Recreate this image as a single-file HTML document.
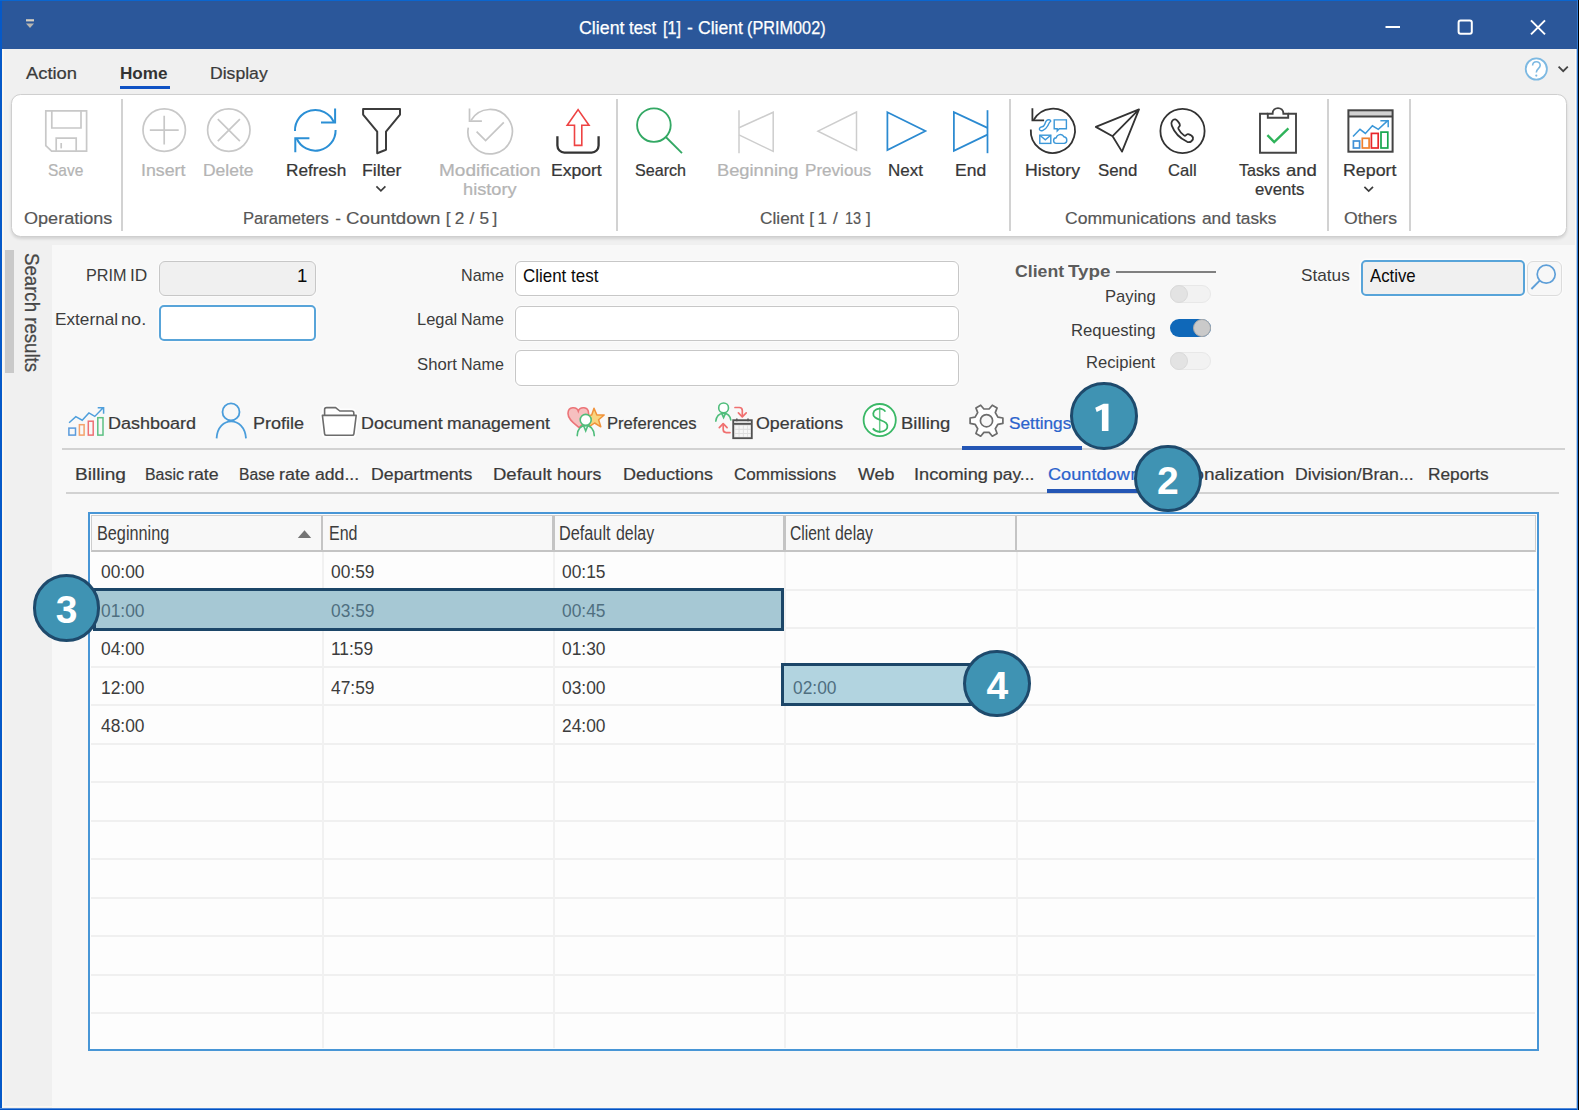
<!DOCTYPE html>
<html><head><meta charset="utf-8"><title>Client test [1] - Client (PRIM002)</title>
<style>
*{box-sizing:border-box;margin:0;padding:0}
html,body{width:1579px;height:1110px;overflow:hidden}
body{position:relative;background:#f8f8f8;font-family:"Liberation Sans",sans-serif}
.a{position:absolute}
.t{position:absolute;white-space:nowrap;line-height:1;transform-origin:0 0;display:block}
.sep{position:absolute;top:99px;width:2px;height:132px;background:#d2d2d2}
.inp{position:absolute;background:#fff;border:1.8px solid #c7c7c7;border-radius:6px;box-shadow:0 0 0 1px #fbfbfb}
.hl{position:absolute;border:3px solid #1c4668}
.cir{position:absolute;width:67.8px;height:67.8px;border-radius:50%;background:#3f93b3;border:3.6px solid #1e4a6c;color:#fff;font-weight:bold;font-size:39px;line-height:55.4px;padding-top:5.2px;text-align:center}
.tg{position:absolute;width:41px;height:18px;border-radius:9px}
.tg.off{background:#f2f2f2;border:1px solid #e8e8e8}
.tg.off i{position:absolute;left:-1px;top:-1px;width:18px;height:18px;border-radius:50%;background:#e3e3e3;border:1px solid #dadada}
.tg.on{background:#0f68b9}
.tg.on i{position:absolute;right:0;top:0;width:18px;height:18px;border-radius:50%;background:#cacaca;border:1px solid #a9a9a9}
.cir b{display:inline-block;transform:scaleX(1.0)}
svg{position:absolute;overflow:visible}
</style></head>
<body>
<!-- sidebar -->
<div class="a" style="left:0;top:49px;width:52px;height:1061px;background:#f0f0f0"></div>
<!-- menu bar bg -->
<div class="a" style="left:0;top:49px;width:1579px;height:195.5px;background:#f0f0f0"></div>
<!-- title bar -->
<div class="a" style="left:0;top:0;width:1579px;height:49px;background:#2b579a"></div>
<!-- ribbon panel -->
<div class="a" style="left:10.8px;top:93.7px;width:1556.3px;height:143.2px;background:#fff;border:1.8px solid #cfcfcf;border-radius:9.5px;box-shadow:0 2px 3px rgba(0,0,0,.12)"></div>
<div class="sep" style="left:121px"></div>
<div class="sep" style="left:616.4px"></div>
<div class="sep" style="left:1009.3px"></div>
<div class="sep" style="left:1327px"></div>
<div class="sep" style="left:1408.8px"></div>
<!-- home underline -->
<div class="a" style="left:120px;top:86px;width:50px;height:3px;background:#0f52c4"></div>
<!-- window controls -->
<svg style="left:0;top:0" width="1579" height="100" viewBox="0 0 1579 100" fill="none">
 <path d="M26 20.3h8" stroke="#d6cfc0" stroke-width="2.2"/>
 <path d="M26 23.4h8l-4 4.6z" fill="#b9b6b0"/>
 <path d="M1385.5 27h14.5" stroke="#fff" stroke-width="2"/>
 <rect x="1458.6" y="20.6" width="13.2" height="13.2" rx="2" stroke="#fff" stroke-width="2"/>
 <path d="M1531 20.4l14 14M1545 20.4l-14 14" stroke="#fff" stroke-width="2"/>
 <circle cx="1536.3" cy="69" r="10.6" fill="#fff" stroke="#7db9e2" stroke-width="1.8"/>
 <path d="M1532.6 65.6c0-5 7.6-5 7.6-.4c0 3.4-3.9 3.4-3.9 7.2" stroke="#7db9e2" stroke-width="1.6"/>
 <circle cx="1536.3" cy="75.6" r="1.1" fill="#7db9e2"/>
 <path d="M1558.6 66.6l4.6 4.6l4.6-4.6" stroke="#444" stroke-width="1.8"/>
</svg>

<!-- sidebar handle + label -->
<div class="a" style="left:5px;top:250px;width:9px;height:123px;background:#c9c9c9"></div>

<!-- form fields -->
<div class="inp" style="left:159px;top:260.5px;width:157px;height:35.5px;background:#f0f0f0"></div>
<div class="inp" style="left:158.6px;top:304.9px;width:157.2px;height:36px;border:2px solid #58a4d9;border-radius:5px;box-shadow:0 0 0 1.5px #fdfcfb"></div>
<div class="inp" style="left:515px;top:260.5px;width:443.5px;height:35.5px"></div>
<div class="inp" style="left:515px;top:305.5px;width:443.5px;height:35.5px"></div>
<div class="inp" style="left:515px;top:350px;width:443.5px;height:35.5px"></div>
<div class="inp" style="left:1361px;top:260px;width:163.5px;height:36px;background:#f0f0f0;border:2px solid #58a4d9;border-radius:5px;box-shadow:0 0 0 1.5px #fdfcfb"></div>
<div class="inp" style="left:1527px;top:260.5px;width:34.5px;height:35.5px;background:#f7f7f7;border:1.5px solid #dcdcdc"></div>
<svg style="left:0;top:0" width="1579" height="400" viewBox="0 0 1579 400" fill="none">
 <circle cx="1546.2" cy="274.2" r="9" stroke="#5e9fd8" stroke-width="1.7"/>
 <path d="M1539.7 280.6l-8.3 8.4" stroke="#5e9fd8" stroke-width="1.9"/>
</svg>
<div class="a" style="left:1116px;top:271.2px;width:100px;height:1.6px;background:#808080"></div>
<div class="tg off" style="left:1169.5px;top:285px"><i></i></div>
<div class="tg on" style="left:1170px;top:318.5px;width:40.5px"><i></i></div>
<div class="tg off" style="left:1169.5px;top:351.5px"><i></i></div>

<!-- tab lines -->
<div class="a" style="left:62px;top:448.4px;width:1503px;height:1.9px;background:#d2d2d2"></div>
<div class="a" style="left:962px;top:445.5px;width:120px;height:4.6px;background:#2456b5"></div>
<div class="a" style="left:66px;top:492px;width:1493px;height:1.9px;background:#d2d2d2"></div>
<div class="a" style="left:1047px;top:488.5px;width:100px;height:4.6px;background:#2456b5"></div>

<!-- grid -->
<div class="a" style="left:88px;top:511.7px;width:1451px;height:539.4px;background:#fdfdfd;border:2px solid #4896d6"></div>
<div class="a" id="gridlines" style="left:91px;top:552px;width:1444px;height:496px;overflow:hidden">
<div class="a" style="left:0;top:36.65px;width:1444px;height:2.2px;background:#f0f0f0"></div>
<div class="a" style="left:0;top:75.15px;width:1444px;height:2.2px;background:#f0f0f0"></div>
<div class="a" style="left:0;top:113.65px;width:1444px;height:2.2px;background:#f0f0f0"></div>
<div class="a" style="left:0;top:152.15px;width:1444px;height:2.2px;background:#f0f0f0"></div>
<div class="a" style="left:0;top:190.65px;width:1444px;height:2.2px;background:#f0f0f0"></div>
<div class="a" style="left:0;top:229.15px;width:1444px;height:2.2px;background:#f0f0f0"></div>
<div class="a" style="left:0;top:267.65px;width:1444px;height:2.2px;background:#f0f0f0"></div>
<div class="a" style="left:0;top:306.15px;width:1444px;height:2.2px;background:#f0f0f0"></div>
<div class="a" style="left:0;top:344.65px;width:1444px;height:2.2px;background:#f0f0f0"></div>
<div class="a" style="left:0;top:383.15px;width:1444px;height:2.2px;background:#f0f0f0"></div>
<div class="a" style="left:0;top:421.65px;width:1444px;height:2.2px;background:#f0f0f0"></div>
<div class="a" style="left:0;top:460.15px;width:1444px;height:2.2px;background:#f0f0f0"></div>
<div class="a" style="left:230.50px;top:0;width:2.4px;height:496px;background:#f1f1f1"></div>
<div class="a" style="left:462.10px;top:0;width:2.4px;height:496px;background:#f1f1f1"></div>
<div class="a" style="left:693.10px;top:0;width:2.4px;height:496px;background:#f1f1f1"></div>
<div class="a" style="left:924.55px;top:0;width:2.4px;height:496px;background:#f1f1f1"></div>
</div>
<div class="a" style="left:91px;top:515px;width:1445px;height:37px;background:#f8f8f8;border:1.5px solid #cdcdcd;border-bottom:2px solid #c4c4c4"></div>
<div class="a" style="left:320.6px;top:516px;width:2.6px;height:35px;background:#c4c4c4"></div>
<div class="a" style="left:552.4px;top:516px;width:2.6px;height:35px;background:#c4c4c4"></div>
<div class="a" style="left:783.2px;top:516px;width:2.6px;height:35px;background:#c4c4c4"></div>
<div class="a" style="left:1014.6px;top:516px;width:2.6px;height:35px;background:#c4c4c4"></div>
<svg style="left:0;top:0" width="400" height="560" viewBox="0 0 400 560"><path d="M297.8 537.9h13.4l-6.7-7.7z" fill="#757575"/></svg>

<!-- highlights -->
<div class="hl" style="left:93px;top:588.2px;width:690.6px;height:42.6px;background:#a6c8d4"></div>
<div class="hl" style="left:780.9px;top:662.9px;width:215px;height:43.2px;background:#b2d4e0"></div>

<svg style="left:0;top:0" width="1579" height="240" viewBox="0 0 1579 240" fill="none" stroke-linecap="butt" stroke-linejoin="miter">
<!-- Save -->
<g stroke="#c8c8c8" stroke-width="1.7">
 <path d="M45.8 110.8H86.6V151.2H51.6L45.8 145.6Z"/>
 <path d="M51.8 110.8V128H81V110.8"/>
 <path d="M56.2 151.2V138.2H76.2V151.2"/>
 <path d="M61.2 143V148.4"/>
</g>
<!-- Insert / Delete -->
<g stroke="#c8c8c8" stroke-width="1.7">
 <circle cx="164.2" cy="130.1" r="21.2"/>
 <path d="M149.8 130.1H178.7M164.2 115.7V144.5"/>
 <circle cx="228.8" cy="130.1" r="21.2"/>
 <path d="M217.8 119.2L239.9 141.2M239.9 119.2L217.8 141.2"/>
</g>
<!-- Refresh -->
<g stroke="#2b8fd5" stroke-width="2">
 <path d="M295 131A20.3 20.3 0 0 1 333.8 122"/>
 <path d="M335.1 108.4V122.6H321"/>
 <path d="M335.6 130A20.3 20.3 0 0 1 296.7 138.5"/>
 <path d="M295.3 152.3V138.3H309.4"/>
</g>
<!-- Filter -->
<path d="M363.1 109H400V114.6L386 131.6V149.8L377.2 153.2V131.6L363.1 114.6Z" stroke="#3c3c3c" stroke-width="2" stroke-linejoin="round"/>
<!-- Modification history -->
<g stroke="#c6c6c6" stroke-width="1.7">
 <path d="M468.3 127.6A22.2 22.2 0 1 0 471 120.4"/>
 <path d="M469.5 108.6V121.1H481.9"/>
 <path d="M476.6 131.6L485.6 140.5L503.8 122.3"/>
</g>
<!-- Export -->
<path d="M557.4 136.2V145.6A7 7 0 0 0 564.4 152.6H591.6A7 7 0 0 0 598.6 145.6V136.2" stroke="#333" stroke-width="2.3"/>
<path d="M578.1 109.6L589 125.2H581.8V145.4H574.5V125.2H567.2Z" stroke="#ee4343" stroke-width="1.6"/>
<!-- Search -->
<g stroke="#33a864" stroke-width="1.85">
 <circle cx="653.9" cy="125.1" r="16.8"/>
 <path d="M665.8 137L682 153.2"/>
</g>
<!-- Beginning / Previous -->
<g stroke="#cdcdcd" stroke-width="1.5">
 <path d="M739 110.3V153.2"/>
 <path d="M739 127.8L773.2 112.2V151.4L739 134.9"/>
 <path d="M818 131.2L856.5 112V150.3Z"/>
</g>
<!-- Next / End -->
<g stroke="#2b8ad1" stroke-width="1.75">
 <path d="M887.4 112.2L925.4 131L887.4 150Z"/>
 <path d="M987.5 127.9L953.9 112.2V150.8L987.5 134.6"/>
 <path d="M987.5 110.2V153.2"/>
</g>
<!-- History -->
<g stroke="#333" stroke-width="1.8">
 <path d="M1030.8 129.5A22.1 22.1 0 1 0 1033.6 120"/>
 <path d="M1032.4 108.2V120.4H1044.1"/>
</g>
<g stroke="#3b97d8" stroke-width="1.4">
 <path d="M1048.6 119.8c-2.6 0-3.2 2.6-3.8 4.4s-1.800 2.600-3.400 2.800s-2.400 1.600-1.800 2.800s2 1.200 3.400 .6s3.400-2.200 4.600-4.400s1.600-3.400 2.600-4.200s.6-2-1.600-2z"/>
 <path d="M1054.200 119.900H1066.400V128.700H1059.200L1057.200 130.900V128.700H1054.200Z"/>
 <rect x="1039.800" y="135.200" width="11" height="8.2"/>
 <path d="M1039.800 135.200L1045.300 139.900L1050.800 135.200"/>
 <path d="M1056.6 143.400a2.800 2.800 0 0 1 -.4 -5.600a4.200 4.200 0 0 1 7.800 -1a3.400 3.400 0 0 1 .4 6.600Z"/>
</g>
<!-- Send -->
<path d="M1095.800 126.900L1139 109.400L1122 151.600L1112.600 136.200ZM1112.600 136.200L1139 109.400" stroke="#333" stroke-width="1.8" stroke-linejoin="round"/>
<!-- Call -->
<g stroke="#333" stroke-width="1.8">
 <circle cx="1182.500" cy="131" r="22.100"/>
 <path d="M1175.400 119.400c-1.400 -.4 -2.600 .6 -3.400 1.800c-.8 1.200 -.8 2.800 -.2 4.400c2.200 6 7.600 12.400 15.400 16.200c1.400 .6 3 .4 4.200 -.6c1.200 -1 2 -2.200 1.600 -3.600c-.4 -1.200 -2.800 -2.800 -4.600 -3.400c-1 -.4 -1.800 .2 -2.400 1c-.6 .6 -1.200 .8 -2 .2c-2.400 -1.800 -4.400 -4.200 -5.600 -6.600c-.4 -.8 0 -1.400 .6 -2c.8 -.6 1.200 -1.400 .8 -2.400c-.6 -1.800 -3 -4.600 -4.400 -5z"/>
</g>
<!-- Tasks -->
<g stroke="#444" stroke-width="1.9">
 <path d="M1267.800 113.700H1260V152.800H1296V113.700H1288.200"/>
 <path d="M1267.800 113.700V117.700H1288.200V113.700H1283.400C1283.400 106.300 1272.600 106.300 1272.600 113.700Z"/>
</g>
<path d="M1267.400 135.200L1274.200 142L1288.400 128.400" stroke="#2fb35a" stroke-width="2.400"/>
<!-- Report -->
<rect x="1348.400" y="110.300" width="44.200" height="6.200" fill="#d2d2d2"/>
<g stroke="#444" stroke-width="2">
 <rect x="1348.400" y="110.300" width="44.200" height="41.400"/>
 <path d="M1348.400 116.600H1392.600"/>
</g>
<g stroke-width="1.700">
 <rect x="1353.400" y="141" width="6.200" height="7" stroke="#3f8fd6"/>
 <rect x="1362.300" y="138.300" width="6.800" height="9.700" stroke="#f0802e"/>
 <rect x="1371.400" y="133.400" width="6.800" height="14.600" stroke="#e8262a"/>
 <rect x="1381" y="132.100" width="6.800" height="15.900" stroke="#16a64e"/>
 <path d="M1353 136.600L1360 129.300L1365.400 133.400L1372.400 125.800L1378.300 129.300L1388 120.400M1380.400 120.700H1388.200V127.200" stroke="#3b97d8" stroke-width="1.500"/>
</g>
<!-- dropdown chevrons -->
<path d="M376.400 186.400L380.900 190.900L385.400 186.400" stroke="#3c3c3c" stroke-width="1.700"/>
<path d="M1364.400 186.900L1368.700 191.100L1373 186.900" stroke="#3c3c3c" stroke-width="1.700"/>
</svg>

<svg style="left:0;top:0" width="1579" height="450" viewBox="0 0 1579 450" fill="none">
<!-- Dashboard -->
<g stroke-width="1.5">
 <rect x="68.9" y="428.1" width="6.6" height="7" stroke="#5a9bdc"/>
 <rect x="79.4" y="424.7" width="4.7" height="10.4" stroke="#f4a26c"/>
 <rect x="88.3" y="421.2" width="4.9" height="13.9" stroke="#ee7074"/>
 <rect x="97.8" y="417.7" width="5.2" height="17.4" stroke="#5cc083"/>
 <path d="M69.1 422.7L75.8 416.7L82.2 420.2L88.9 412.9L94.8 416.4L103.4 407.4M97.7 407.7H103.6V413.8" stroke="#4f9fdc"/>
</g>
<!-- Profile -->
<g stroke="#4a9ddb" stroke-width="1.8">
 <circle cx="231" cy="411.9" r="8.5"/>
 <path d="M216.6 438.4C217.6 415.6 244.6 415.6 246 438.4"/>
</g>
<!-- Folder (white halo) -->
<g stroke="#fff" stroke-width="5" stroke-linejoin="round" opacity=".9">
 <path d="M324.600 415.400V409.600Q324.600 407.600 326.600 407.600H335.600L339.800 411H351.800Q353.800 411 353.800 413V415.400"/>
 <path d="M322.400 415.400H356.200L353.900 435.200H324.600Z" fill="#fff"/>
</g>
<g stroke="#6c6c6c" stroke-width="1.6" stroke-linejoin="round">
 <path d="M324.600 415.400V409.600Q324.600 407.600 326.600 407.600H335.600L339.800 411H351.800Q353.800 411 353.800 413V415.400" fill="#fff"/>
 <path d="M322.400 415.400H356.200L353.900 433.800Q353.700 435.300 352.200 435.300H326.300Q324.800 435.300 324.600 433.800Z" fill="#fff"/>
</g>
<!-- Preferences -->
<path d="M578.300 411.200C576.800 406.600 568.200 406 568 413.400C567.900 419.600 574.800 423.800 579.200 427.600C583.600 423.800 588.700 419.800 588.600 413.400C588.400 406 579.800 406.600 578.300 411.200Z" fill="#f6c0c0" stroke="#ec7478" stroke-width="1.6"/>
<path d="M594.0 408.2 L596.9 415.0 L604.2 415.0 L598.6 419.8 L600.8 426.8 L594.6 423.0 L588.6 427.2 L590.3 420.1 L584.4 415.7 L591.7 415.1Z" fill="#f9d47e" stroke="#f0923a" stroke-width="1.5" stroke-linejoin="round"/>
<g stroke="#4fbd7b" stroke-width="1.6">
 <path d="M577.200 435.600C577.600 429 581 425.600 585.700 425.400C590.400 425.600 593.800 429 594.300 435.600" fill="#f8f8f8" stroke-linecap="round"/>
 <circle cx="585.700" cy="419.900" r="5.500" fill="#fff"/>
 <path d="M583.700 426L585.700 430.800L587.700 426"/>
</g>
<!-- Operations -->
<g stroke="#4fbd7b" stroke-width="1.6">
 <path d="M715.800 421.200C716.400 416 719.600 413.400 723.600 413.200C727.600 413.400 730.200 416 730.800 420" stroke-linecap="round"/>
 <circle cx="723.600" cy="407.900" r="4.900" fill="#fff"/>
 <path d="M721.800 413.600L723.600 417.600L725.400 413.600"/>
</g>
<g stroke="#f07070" stroke-width="1.700" stroke-linecap="round" stroke-linejoin="round">
 <path d="M735 407.500H739.300Q742.300 407.500 742.300 410.500V416.300"/>
 <path d="M738.400 412.800L742.300 416.800L746.200 412.800"/>
 <path d="M730 432.600H726.200Q723.200 432.600 723.200 429.600V424"/>
 <path d="M719.300 427.600L723.200 423.600L727.100 427.600"/>
</g>
<rect x="733.200" y="420.200" width="18.600" height="18" fill="#dedede" stroke="#505050" stroke-width="1.800"/>
<path d="M733.200 423.900H751.800" stroke="#555" stroke-width="1.800"/>
<path d="M736.800 418.600V421.200M748 418.600V421.200" stroke="#555" stroke-width="1.600"/>
<g fill="#f6f6f6">
 <rect x="735.200" y="425.600" width="3.400" height="3.200"/><rect x="739.500" y="425.600" width="3.400" height="3.200"/><rect x="743.800" y="425.600" width="3.400" height="3.200"/><rect x="748" y="425.600" width="2.400" height="3.200"/>
 <rect x="735.200" y="429.800" width="3.400" height="3.200"/><rect x="739.500" y="429.800" width="3.400" height="3.200"/><rect x="743.800" y="429.800" width="3.400" height="3.200"/><rect x="748" y="429.800" width="2.400" height="3.200"/>
 <rect x="735.200" y="434" width="3.400" height="2.800"/><rect x="739.500" y="434" width="3.400" height="2.800"/><rect x="743.800" y="434" width="3.400" height="2.800"/><rect x="748" y="434" width="2.400" height="2.800"/>
</g>
<!-- Billing -->
<g stroke="#3ab866" stroke-width="1.800">
 <circle cx="879.700" cy="420.100" r="16.100" fill="#fff"/>
 <path d="M885.400 411.600C883.600 408.400 879.400 408 876.400 409.400C872.600 411.200 872.200 415.400 875.200 417.600C878.200 419.800 883.600 420.600 886.200 423.200C888.600 425.800 887.400 429.800 883.600 431.200C879.800 432.400 875.400 431.600 872.800 428.400"/>
 <path d="M879.700 407.400V433" stroke-width="1.500" opacity=".75"/>
</g>
<!-- Settings gear -->
<path d="M997.9 417.1 L1002.9 418.0 L1002.9 423.4 L997.9 424.3 L995.3 428.8 L997.1 433.5 L992.3 436.2 L989.1 432.4 L983.9 432.4 L980.7 436.2 L975.9 433.5 L977.7 428.8 L975.1 424.3 L970.1 423.4 L970.1 418.0 L975.1 417.1 L977.7 412.6 L975.9 407.9 L980.7 405.2 L983.9 409.0 L989.1 409.0 L992.3 405.2 L997.1 407.9 L995.3 412.6Z" fill="#fff" stroke="#6c6c6c" stroke-width="1.7" stroke-linejoin="round"/>
<circle cx="986.5" cy="420.7" r="6.1" fill="#f8f8f8" stroke="#6c6c6c" stroke-width="1.7"/>
</svg>

<span class="t" style="left:578.70px;top:20.19px;font-size:17.5px;color:#ffffff;transform:scaleX(1.0161);-webkit-text-stroke:.25px #fff;">Client</span>
<span class="t" style="left:629.40px;top:20.19px;font-size:17.5px;color:#ffffff;transform:scaleX(0.9596);-webkit-text-stroke:.25px #fff;">test</span>
<span class="t" style="left:663.18px;top:20.19px;font-size:17.5px;color:#ffffff;transform:scaleX(0.9207);-webkit-text-stroke:.25px #fff;">[1]</span>
<span class="t" style="left:686.95px;top:20.19px;font-size:17.5px;color:#ffffff;transform:scaleX(1.0000);-webkit-text-stroke:.25px #fff;">-</span>
<span class="t" style="left:697.90px;top:20.19px;font-size:17.5px;color:#ffffff;transform:scaleX(1.0049);-webkit-text-stroke:.25px #fff;">Client</span>
<span class="t" style="left:747.17px;top:20.19px;font-size:17.5px;color:#ffffff;transform:scaleX(0.9290);-webkit-text-stroke:.25px #fff;">(PRIM002)</span>
<span class="t" style="left:26.20px;top:64.67px;font-size:17.4px;color:#3a3a3a;transform:scaleX(1.0554);-webkit-text-stroke:.24px;">Action</span>
<span class="t" style="left:119.82px;top:64.67px;font-size:17.4px;color:#333;transform:scaleX(0.9844);font-weight:bold;">Home</span>
<span class="t" style="left:210.39px;top:64.67px;font-size:17.4px;color:#3a3a3a;transform:scaleX(1.0120);-webkit-text-stroke:.24px;">Display</span>
<span class="t" style="left:48.30px;top:162.01px;font-size:17px;color:#b4b4b4;transform:scaleX(0.9114);-webkit-text-stroke:.24px;">Save</span>
<span class="t" style="left:141.45px;top:162.01px;font-size:17px;color:#b4b4b4;transform:scaleX(1.0456);-webkit-text-stroke:.24px;">Insert</span>
<span class="t" style="left:203.47px;top:162.01px;font-size:17px;color:#b4b4b4;transform:scaleX(1.0276);-webkit-text-stroke:.24px;">Delete</span>
<span class="t" style="left:286.39px;top:162.01px;font-size:17px;color:#363636;transform:scaleX(1.0126);-webkit-text-stroke:.24px;">Refresh</span>
<span class="t" style="left:362.06px;top:162.01px;font-size:17px;color:#363636;transform:scaleX(1.0427);-webkit-text-stroke:.24px;">Filter</span>
<span class="t" style="left:438.98px;top:162.01px;font-size:17px;color:#b4b4b4;transform:scaleX(1.1192);-webkit-text-stroke:.24px;">Modification</span>
<span class="t" style="left:463.43px;top:181.31px;font-size:17px;color:#b4b4b4;transform:scaleX(1.0712);-webkit-text-stroke:.24px;">history</span>
<span class="t" style="left:551.47px;top:162.01px;font-size:17px;color:#363636;transform:scaleX(1.0329);-webkit-text-stroke:.24px;">Export</span>
<span class="t" style="left:634.80px;top:162.01px;font-size:17px;color:#363636;transform:scaleX(0.9474);-webkit-text-stroke:.24px;">Search</span>
<span class="t" style="left:716.52px;top:162.01px;font-size:17px;color:#b4b4b4;transform:scaleX(1.0760);-webkit-text-stroke:.24px;">Beginning</span>
<span class="t" style="left:804.50px;top:162.01px;font-size:17px;color:#b4b4b4;transform:scaleX(1.0040);-webkit-text-stroke:.24px;">Previous</span>
<span class="t" style="left:887.60px;top:162.01px;font-size:17px;color:#363636;transform:scaleX(0.9991);-webkit-text-stroke:.24px;">Next</span>
<span class="t" style="left:955.47px;top:162.01px;font-size:17px;color:#363636;transform:scaleX(1.0280);-webkit-text-stroke:.24px;">End</span>
<span class="t" style="left:1025.06px;top:162.01px;font-size:17px;color:#363636;transform:scaleX(1.0402);-webkit-text-stroke:.24px;">History</span>
<span class="t" style="left:1098.30px;top:162.01px;font-size:17px;color:#363636;transform:scaleX(0.9911);-webkit-text-stroke:.24px;">Send</span>
<span class="t" style="left:1167.90px;top:162.01px;font-size:17px;color:#363636;transform:scaleX(0.9752);-webkit-text-stroke:.24px;">Call</span>
<span class="t" style="left:1239.40px;top:162.01px;font-size:17px;color:#363636;transform:scaleX(0.9452);-webkit-text-stroke:.24px;">Tasks</span>
<span class="t" style="left:1285.70px;top:162.01px;font-size:17px;color:#363636;transform:scaleX(1.0892);-webkit-text-stroke:.24px;">and</span>
<span class="t" style="left:1254.60px;top:181.31px;font-size:17px;color:#363636;transform:scaleX(0.9841);-webkit-text-stroke:.24px;">events</span>
<span class="t" style="left:1342.65px;top:162.01px;font-size:17px;color:#363636;transform:scaleX(1.0477);-webkit-text-stroke:.24px;">Report</span>
<span class="t" style="left:24.10px;top:209.84px;font-size:17.2px;color:#565656;transform:scaleX(1.0505);-webkit-text-stroke:.2px;">Operations</span>
<span class="t" style="left:243.23px;top:209.84px;font-size:17.2px;color:#565656;transform:scaleX(0.9652);-webkit-text-stroke:.2px;">Parameters</span>
<span class="t" style="left:335.20px;top:209.84px;font-size:17.2px;color:#565656;transform:scaleX(1.0000);-webkit-text-stroke:.2px;">-</span>
<span class="t" style="left:346.20px;top:209.84px;font-size:17.2px;color:#565656;transform:scaleX(1.0869);-webkit-text-stroke:.2px;">Countdown</span>
<span class="t" style="left:445.75px;top:209.84px;font-size:17.2px;color:#565656;transform:scaleX(1.0000);-webkit-text-stroke:.2px;">[</span>
<span class="t" style="left:454.80px;top:209.84px;font-size:17.2px;color:#565656;transform:scaleX(1.0000);-webkit-text-stroke:.2px;">2</span>
<span class="t" style="left:469.55px;top:209.84px;font-size:17.2px;color:#565656;transform:scaleX(1.0000);-webkit-text-stroke:.2px;">/</span>
<span class="t" style="left:479.50px;top:209.84px;font-size:17.2px;color:#565656;transform:scaleX(1.0000);-webkit-text-stroke:.2px;">5</span>
<span class="t" style="left:492.50px;top:209.84px;font-size:17.2px;color:#565656;transform:scaleX(1.0000);-webkit-text-stroke:.2px;">]</span>
<span class="t" style="left:759.50px;top:209.84px;font-size:17.2px;color:#565656;transform:scaleX(1.0053);-webkit-text-stroke:.2px;">Client</span>
<span class="t" style="left:809.35px;top:209.84px;font-size:17.2px;color:#565656;transform:scaleX(1.0000);-webkit-text-stroke:.2px;">[</span>
<span class="t" style="left:817.45px;top:209.84px;font-size:17.2px;color:#565656;transform:scaleX(1.0000);-webkit-text-stroke:.2px;">1</span>
<span class="t" style="left:832.90px;top:209.84px;font-size:17.2px;color:#565656;transform:scaleX(1.0000);-webkit-text-stroke:.2px;">/</span>
<span class="t" style="left:844.66px;top:209.84px;font-size:17.2px;color:#565656;transform:scaleX(0.8429);-webkit-text-stroke:.2px;">13</span>
<span class="t" style="left:865.95px;top:209.84px;font-size:17.2px;color:#565656;transform:scaleX(1.0000);-webkit-text-stroke:.2px;">]</span>
<span class="t" style="left:1064.70px;top:209.84px;font-size:17.2px;color:#565656;transform:scaleX(1.0219);-webkit-text-stroke:.2px;">Communications</span>
<span class="t" style="left:1201.60px;top:209.84px;font-size:17.2px;color:#565656;transform:scaleX(1.0065);-webkit-text-stroke:.2px;">and</span>
<span class="t" style="left:1235.80px;top:209.84px;font-size:17.2px;color:#565656;transform:scaleX(1.0070);-webkit-text-stroke:.2px;">tasks</span>
<span class="t" style="left:1343.70px;top:209.84px;font-size:17.2px;color:#565656;transform:scaleX(1.0277);-webkit-text-stroke:.2px;">Others</span>
<span class="t" style="left:85.85px;top:267.01px;font-size:17px;color:#3c3c3c;transform:scaleX(0.9544);">PRIM</span>
<span class="t" style="left:129.88px;top:267.01px;font-size:17px;color:#3c3c3c;transform:scaleX(1.0176);">ID</span>
<span class="t" style="left:55.09px;top:310.81px;font-size:17px;color:#3c3c3c;transform:scaleX(1.0118);">External</span>
<span class="t" style="left:121.43px;top:310.81px;font-size:17px;color:#3c3c3c;transform:scaleX(1.0680);">no.</span>
<span class="t" style="left:460.75px;top:267.01px;font-size:17px;color:#3c3c3c;transform:scaleX(0.9478);">Name</span>
<span class="t" style="left:417.13px;top:310.81px;font-size:17px;color:#3c3c3c;transform:scaleX(0.9669);">Legal</span>
<span class="t" style="left:460.75px;top:310.81px;font-size:17px;color:#3c3c3c;transform:scaleX(0.9455);">Name</span>
<span class="t" style="left:417.10px;top:355.61px;font-size:17px;color:#3c3c3c;transform:scaleX(0.9827);">Short</span>
<span class="t" style="left:460.75px;top:355.61px;font-size:17px;color:#3c3c3c;transform:scaleX(0.9455);">Name</span>
<span class="t" style="left:523.30px;top:267.06px;font-size:18.6px;color:#0a0a0a;transform:scaleX(0.9113);">Client test</span>
<span class="t" style="left:297.00px;top:267.06px;font-size:18.6px;color:#0a0a0a;transform:scaleX(1.0000);">1</span>
<span class="t" style="left:1014.50px;top:262.96px;font-size:17.3px;color:#5c5c5c;transform:scaleX(1.0238);font-weight:bold;">Client</span>
<span class="t" style="left:1068.40px;top:262.96px;font-size:17.3px;color:#5c5c5c;transform:scaleX(1.0877);font-weight:bold;">Type</span>
<span class="t" style="left:1104.62px;top:287.81px;font-size:17px;color:#3c3c3c;transform:scaleX(0.9777);">Paying</span>
<span class="t" style="left:1070.92px;top:321.51px;font-size:17px;color:#3c3c3c;transform:scaleX(0.9829);">Requesting</span>
<span class="t" style="left:1086.32px;top:353.91px;font-size:17px;color:#3c3c3c;transform:scaleX(0.9765);">Recipient</span>
<span class="t" style="left:1301.40px;top:267.01px;font-size:17px;color:#3c3c3c;transform:scaleX(1.0127);">Status</span>
<span class="t" style="left:1370.00px;top:267.06px;font-size:18.6px;color:#0a0a0a;transform:scaleX(0.9027);">Active</span>
<span class="t" style="left:107.76px;top:414.76px;font-size:17.3px;color:#3a3a3a;transform:scaleX(1.0418);-webkit-text-stroke:.24px;">Dashboard</span>
<span class="t" style="left:252.56px;top:414.76px;font-size:17.3px;color:#3a3a3a;transform:scaleX(1.0428);-webkit-text-stroke:.24px;">Profile</span>
<span class="t" style="left:360.56px;top:414.76px;font-size:17.3px;color:#3a3a3a;transform:scaleX(1.0364);-webkit-text-stroke:.24px;">Document</span>
<span class="t" style="left:447.08px;top:414.76px;font-size:17.3px;color:#3a3a3a;transform:scaleX(1.0193);-webkit-text-stroke:.24px;">management</span>
<span class="t" style="left:607.24px;top:414.76px;font-size:17.3px;color:#3a3a3a;transform:scaleX(0.9607);-webkit-text-stroke:.24px;">Preferences</span>
<span class="t" style="left:756.40px;top:414.76px;font-size:17.3px;color:#3a3a3a;transform:scaleX(1.0295);-webkit-text-stroke:.24px;">Operations</span>
<span class="t" style="left:901.33px;top:414.76px;font-size:17.3px;color:#3a3a3a;transform:scaleX(1.0698);-webkit-text-stroke:.24px;">Billing</span>
<span class="t" style="left:1008.80px;top:414.76px;font-size:17.3px;color:#2b63cc;transform:scaleX(0.9984);-webkit-text-stroke:.24px;">Settings</span>
<span class="t" style="left:74.70px;top:465.96px;font-size:17.3px;color:#3a3a3a;transform:scaleX(1.1035);-webkit-text-stroke:.24px;">Billing</span>
<span class="t" style="left:144.88px;top:465.96px;font-size:17.3px;color:#3a3a3a;transform:scaleX(0.9203);-webkit-text-stroke:.24px;">Basic</span>
<span class="t" style="left:188.37px;top:465.96px;font-size:17.3px;color:#3a3a3a;transform:scaleX(1.0260);-webkit-text-stroke:.24px;">rate</span>
<span class="t" style="left:238.69px;top:465.96px;font-size:17.3px;color:#3a3a3a;transform:scaleX(0.9053);-webkit-text-stroke:.24px;">Base</span>
<span class="t" style="left:278.76px;top:465.96px;font-size:17.3px;color:#3a3a3a;transform:scaleX(1.0367);-webkit-text-stroke:.24px;">rate</span>
<span class="t" style="left:314.80px;top:465.96px;font-size:17.3px;color:#3a3a3a;transform:scaleX(1.0204);-webkit-text-stroke:.24px;">add...</span>
<span class="t" style="left:370.88px;top:465.96px;font-size:17.3px;color:#3a3a3a;transform:scaleX(1.0245);-webkit-text-stroke:.24px;">Departments</span>
<span class="t" style="left:493.03px;top:465.96px;font-size:17.3px;color:#3a3a3a;transform:scaleX(1.0713);-webkit-text-stroke:.24px;">Default</span>
<span class="t" style="left:557.38px;top:465.96px;font-size:17.3px;color:#3a3a3a;transform:scaleX(1.0238);-webkit-text-stroke:.24px;">hours</span>
<span class="t" style="left:622.56px;top:465.96px;font-size:17.3px;color:#3a3a3a;transform:scaleX(1.0418);-webkit-text-stroke:.24px;">Deductions</span>
<span class="t" style="left:734.30px;top:465.96px;font-size:17.3px;color:#3a3a3a;transform:scaleX(0.9859);-webkit-text-stroke:.24px;">Commissions</span>
<span class="t" style="left:857.50px;top:465.96px;font-size:17.3px;color:#3a3a3a;transform:scaleX(1.0315);-webkit-text-stroke:.24px;">Web</span>
<span class="t" style="left:913.85px;top:465.96px;font-size:17.3px;color:#3a3a3a;transform:scaleX(1.0539);-webkit-text-stroke:.24px;">Incoming</span>
<span class="t" style="left:992.89px;top:465.96px;font-size:17.3px;color:#3a3a3a;transform:scaleX(1.0081);-webkit-text-stroke:.24px;">pay...</span>
<span class="t" style="left:1047.60px;top:465.96px;font-size:17.3px;color:#2b63cc;transform:scaleX(1.0506);-webkit-text-stroke:.24px;">Countdow</span>
<span class="t" style="left:1130.60px;top:465.96px;font-size:17.3px;color:#2b63cc;transform:scaleX(1.0000);-webkit-text-stroke:.24px;">n</span>
<span class="t" style="left:1155.12px;top:465.96px;font-size:17.3px;color:#3a3a3a;transform:scaleX(1.0842);-webkit-text-stroke:.24px;">Perso</span>
<span class="t" style="left:1203.60px;top:465.96px;font-size:17.3px;color:#3a3a3a;transform:scaleX(1.0994);-webkit-text-stroke:.24px;">nalization</span>
<span class="t" style="left:1294.98px;top:465.96px;font-size:17.3px;color:#3a3a3a;transform:scaleX(1.0209);-webkit-text-stroke:.24px;">Division/Bran...</span>
<span class="t" style="left:1427.50px;top:465.96px;font-size:17.3px;color:#3a3a3a;transform:scaleX(1.0005);-webkit-text-stroke:.24px;">Reports</span>
<span class="t" style="left:96.77px;top:523.69px;font-size:19.5px;color:#3c3c3c;transform:scaleX(0.8328);">Beginning</span>
<span class="t" style="left:328.68px;top:523.69px;font-size:19.5px;color:#3c3c3c;transform:scaleX(0.8219);">End</span>
<span class="t" style="left:559.37px;top:523.69px;font-size:19.5px;color:#3c3c3c;transform:scaleX(0.8343);">Default</span>
<span class="t" style="left:616.00px;top:523.69px;font-size:19.5px;color:#3c3c3c;transform:scaleX(0.8172);">delay</span>
<span class="t" style="left:790.38px;top:523.69px;font-size:19.5px;color:#3c3c3c;transform:scaleX(0.8000);">Client</span>
<span class="t" style="left:835.00px;top:523.69px;font-size:19.5px;color:#3c3c3c;transform:scaleX(0.8129);">delay</span>
<span class="t" style="left:100.70px;top:562.35px;font-size:19.2px;color:#3c3c3c;transform:scaleX(0.9050);">00:00</span>
<span class="t" style="left:330.60px;top:562.35px;font-size:19.2px;color:#3c3c3c;transform:scaleX(0.9050);">00:59</span>
<span class="t" style="left:561.60px;top:562.35px;font-size:19.2px;color:#3c3c3c;transform:scaleX(0.9050);">00:15</span>
<span class="t" style="left:100.70px;top:600.85px;font-size:19.2px;color:#4f6f80;transform:scaleX(0.9050);">01:00</span>
<span class="t" style="left:330.60px;top:600.85px;font-size:19.2px;color:#4f6f80;transform:scaleX(0.9050);">03:59</span>
<span class="t" style="left:561.60px;top:600.85px;font-size:19.2px;color:#4f6f80;transform:scaleX(0.9050);">00:45</span>
<span class="t" style="left:100.70px;top:639.35px;font-size:19.2px;color:#3c3c3c;transform:scaleX(0.9050);">04:00</span>
<span class="t" style="left:330.60px;top:639.35px;font-size:19.2px;color:#3c3c3c;transform:scaleX(0.9050);">11:59</span>
<span class="t" style="left:561.60px;top:639.35px;font-size:19.2px;color:#3c3c3c;transform:scaleX(0.9050);">01:30</span>
<span class="t" style="left:100.70px;top:677.85px;font-size:19.2px;color:#3c3c3c;transform:scaleX(0.9050);">12:00</span>
<span class="t" style="left:330.60px;top:677.85px;font-size:19.2px;color:#3c3c3c;transform:scaleX(0.9050);">47:59</span>
<span class="t" style="left:561.60px;top:677.85px;font-size:19.2px;color:#3c3c3c;transform:scaleX(0.9050);">03:00</span>
<span class="t" style="left:792.60px;top:677.85px;font-size:19.2px;color:#4f6f80;transform:scaleX(0.9050);">02:00</span>
<span class="t" style="left:100.70px;top:716.35px;font-size:19.2px;color:#3c3c3c;transform:scaleX(0.9050);">48:00</span>
<span class="t" style="left:561.60px;top:716.35px;font-size:19.2px;color:#3c3c3c;transform:scaleX(0.9050);">24:00</span>
<span class="t" style="left:40.89px;top:253.30px;font-size:19.6px;color:#464646;transform:rotate(90deg) scaleX(0.9511);-webkit-text-stroke:.25px;">Search results</span>

<!-- callouts -->
<div class="cir" style="left:1069.9px;top:381.8px"></div>
<svg style="left:0;top:0" width="1200" height="460" viewBox="0 0 1200 460"><path d="M1103.6 403.7H1108.5V431.1H1101.9V409.6L1096.7 412.1L1095.2 407.7Z" fill="#fff"/></svg>
<div class="cir" style="left:1133.9px;top:444.5px"><b>2</b></div>
<div class="cir" style="left:32.7px;top:574.2px"><b>3</b></div>
<div class="cir" style="left:963.4px;top:649.6px"><b>4</b></div>

<!-- window border -->
<div class="a" style="left:2px;top:49px;width:2px;height:1059px;background:#fbf7f0"></div>
<div class="a" style="left:1574.6px;top:49px;width:2px;height:1059px;background:#fcf9f2"></div>
<div class="a" style="left:2px;top:1105.6px;width:1575px;height:1.8px;background:#fcf8f1"></div>
<div class="a" style="left:0;top:0;width:1.8px;height:1110px;background:#0659c8"></div>
<div class="a" style="left:0;top:0;width:1579px;height:1.4px;background:#0a66d0"></div>
<div class="a" style="left:0;top:1107.5px;width:1579px;height:2.5px;background:linear-gradient(#8db4e6,#0051c4 60%)"></div>
<div class="a" style="left:1576px;top:49px;width:1px;height:1058.5px;background:#b5cbe8"></div>
<div class="a" style="left:1577px;top:0;width:1px;height:1110px;background:#2f7ad6"></div>
<div class="a" style="left:1578px;top:0;width:1px;height:1110px;background:#000"></div>
</body></html>
